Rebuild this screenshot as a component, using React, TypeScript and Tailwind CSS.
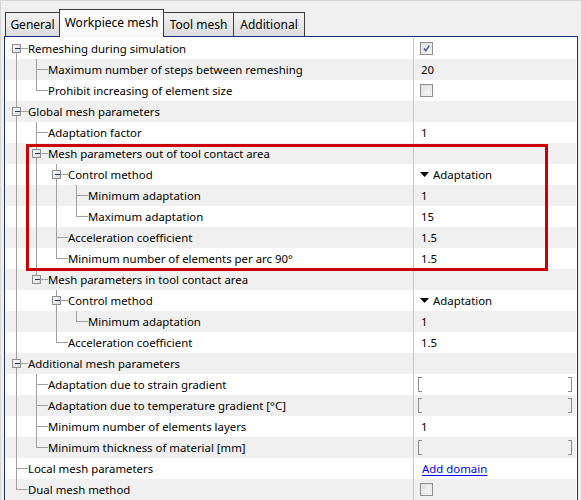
import type { ReactNode } from "react";

type Value =
  | { kind: "text"; text: string }
  | { kind: "check"; checked: boolean }
  | { kind: "combo"; text: string }
  | { kind: "range" }
  | { kind: "link"; text: string }
  | { kind: "none" };

type TreeNode = {
  label: string;
  value?: Value;
  children?: TreeNode[];
};

type FlatRow = {
  label: string;
  value: Value;
  level: number;
  guides: boolean[];
  isLast: boolean;
  isFirstRoot: boolean;
  hasChildren: boolean;
};

const t = (text: string): Value => ({ kind: "text", text });

const tree: TreeNode[] = [
  {
    label: "Remeshing during simulation",
    value: { kind: "check", checked: true },
    children: [
      { label: "Maximum number of steps between remeshing", value: t("20") },
      { label: "Prohibit increasing of element size", value: { kind: "check", checked: false } },
    ],
  },
  {
    label: "Global mesh parameters",
    children: [
      { label: "Adaptation factor", value: t("1") },
      {
        label: "Mesh parameters out of tool contact area",
        children: [
          {
            label: "Control method",
            value: { kind: "combo", text: "Adaptation" },
            children: [
              { label: "Minimum adaptation", value: t("1") },
              { label: "Maximum adaptation", value: t("15") },
            ],
          },
          { label: "Acceleration coefficient", value: t("1.5") },
          { label: "Minimum number of elements per arc 90°", value: t("1.5") },
        ],
      },
      {
        label: "Mesh parameters in tool contact area",
        children: [
          {
            label: "Control method",
            value: { kind: "combo", text: "Adaptation" },
            children: [{ label: "Minimum adaptation", value: t("1") }],
          },
          { label: "Acceleration coefficient", value: t("1.5") },
        ],
      },
    ],
  },
  {
    label: "Additional mesh parameters",
    children: [
      { label: "Adaptation due to strain gradient", value: { kind: "range" } },
      { label: "Adaptation due to temperature gradient [°C]", value: { kind: "range" } },
      { label: "Minimum number of elements layers", value: t("1") },
      { label: "Minimum thickness of material [mm]", value: { kind: "range" } },
    ],
  },
  { label: "Local mesh parameters", value: { kind: "link", text: "Add domain" } },
  { label: "Dual mesh method", value: { kind: "check", checked: false } },
];

function flatten(nodes: TreeNode[], level = 0, guides: boolean[] = []): FlatRow[] {
  const out: FlatRow[] = [];
  nodes.forEach((node, i) => {
    const isLast = i === nodes.length - 1;
    out.push({
      label: node.label,
      value: node.value ?? { kind: "none" },
      level,
      guides,
      isLast,
      isFirstRoot: level === 0 && i === 0,
      hasChildren: !!node.children?.length,
    });
    if (node.children) {
      out.push(...flatten(node.children, level + 1, [...guides, !isLast]));
    }
  });
  return out;
}

const rows = flatten(tree);
const LINE = "#a0a0a0";

function TreeGutter({ row }: { row: FlatRow }) {
  const width = 22 + row.level * 20;
  const cx = (lvl: number) => 10 + lvl * 20 + 0.5;
  const c = cx(row.level);
  return (
    <svg width={width} height={21} className="shrink-0" shapeRendering="crispEdges">
      <defs>
        <linearGradient id="exp" x1="0" y1="0" x2="1" y2="1">
          <stop offset="0" stopColor="#ffffff" />
          <stop offset="1" stopColor="#d6d6d6" />
        </linearGradient>
      </defs>
      {row.guides.map((on, a) =>
        on ? <line key={a} x1={cx(a)} y1={0} x2={cx(a)} y2={21} stroke={LINE} /> : null
      )}
      {!row.isFirstRoot && <line x1={c} y1={0} x2={c} y2={10.5} stroke={LINE} />}
      {!row.isLast && <line x1={c} y1={10.5} x2={c} y2={21} stroke={LINE} />}
      <line x1={c} y1={10.5} x2={c + 11} y2={10.5} stroke={LINE} />
      {row.hasChildren && (
        <g>
          <rect x={c - 4} y={6.5} width={8} height={8} fill="url(#exp)" stroke="#8e8f8f" />
          <line x1={c - 2} y1={10.5} x2={c + 3} y2={10.5} stroke="#1e395b" />
        </g>
      )}
    </svg>
  );
}

function CheckBox({ checked }: { checked: boolean }) {
  return (
    <span className="flex h-[13px] w-[13px] items-center justify-center border border-[#8f8f8f] bg-gradient-to-br from-[#dcdcdc] to-[#f6f6f6] p-px">
      <span className="flex h-full w-full items-center justify-center border border-[#e8e8e8] bg-gradient-to-br from-[#e2e2e2] to-[#fafafa]">
        {checked ? (
          <svg width="9" height="9" viewBox="0 0 9 9">
            <path d="M1.2 4.6 L3.6 7.4 L8 0.8" fill="none" stroke="#3f55a6" strokeWidth="1.8" />
          </svg>
        ) : null}
      </span>
    </span>
  );
}

function Bracket({ side }: { side: "left" | "right" }) {
  return (
    <span
      className={
        side === "left"
          ? "block h-[15px] w-[4px] border-y border-l border-[#8c8c8c]"
          : "block h-[15px] w-[4px] border-y border-r border-[#8c8c8c]"
      }
    />
  );
}

function ValueCell({ value }: { value: Value }): ReactNode {
  switch (value.kind) {
    case "text":
      return <span className="pl-[7px] text-[#000]">{value.text}</span>;
    case "check":
      return (
        <span className="pl-[6px]">
          <CheckBox checked={value.checked} />
        </span>
      );
    case "combo":
      return (
        <span className="flex items-center pl-[6px] text-[#000]">
          <svg width="9" height="5" viewBox="0 0 9 5" className="mr-[4px]">
            <polygon points="0,0 9,0 4.5,5" fill="#000" />
          </svg>
          {value.text}
        </span>
      );
    case "range":
      return (
        <span className="flex w-full items-center justify-between pl-[4px] pr-[4px]">
          <Bracket side="left" />
          <Bracket side="right" />
        </span>
      );
    case "link":
      return <span className="pl-[8px] text-[#0000ff] underline underline-offset-2">{value.text}</span>;
    default:
      return null;
  }
}

const tabs = [
  { name: "General", width: "w-[55px]" },
  { name: "Workpiece mesh", width: "w-[105px]", active: true },
  { name: "Tool mesh", width: "w-[71px]" },
  { name: "Additional", width: "w-[72px]" },
];

export default function App() {
  return (
    <div
      className="relative h-[500px] w-[582px] overflow-hidden border-x border-t border-[#d6d6d6] bg-[#f0f0f0] text-[11.4px] text-black"
      style={{ fontFamily: '"Noto Sans", "Open Sans", sans-serif' }}
    >
      <div className="ml-[4px] mt-[9px] flex h-[26px] items-end text-[12px]">
        {tabs.map((tab) =>
          tab.active ? (
            <div
              key={tab.name}
              className={`relative z-10 -mb-px -ml-px flex h-[28px] ${tab.width} items-center justify-center border border-b-0 border-[#3c3c3c] bg-[#fafafa] pb-[2px]`}
            >
              {tab.name}
            </div>
          ) : (
            <div
              key={tab.name}
              className={`-ml-px flex h-[24px] ${tab.width} items-center justify-center border border-b-0 border-[#3c3c3c] bg-gradient-to-b from-[#f3f3f3] to-[#dcdcdc] first:ml-0`}
            >
              {tab.name}
            </div>
          )
        )}
      </div>

      <div className="ml-[3px] w-[574px] border border-[#172f78] bg-white p-px">
        {rows.map((row, i) => (
          <div key={i} className={`flex h-[21px] items-center ${i % 2 === 0 ? "bg-white" : "bg-[#f0f0f0]"}`}>
            <div className="flex h-full w-[407px] items-center overflow-hidden whitespace-nowrap">
              <TreeGutter row={row} />
              <span>{row.label}</span>
            </div>
            <div className="flex h-full flex-1 items-center border-l border-[#c6c6c6]">
              <ValueCell value={row.value} />
            </div>
          </div>
        ))}
      </div>

      <div className="absolute left-[25px] top-[143px] h-[127px] w-[522px] border-[3px] border-[#cc0000]" />
    </div>
  );
}
